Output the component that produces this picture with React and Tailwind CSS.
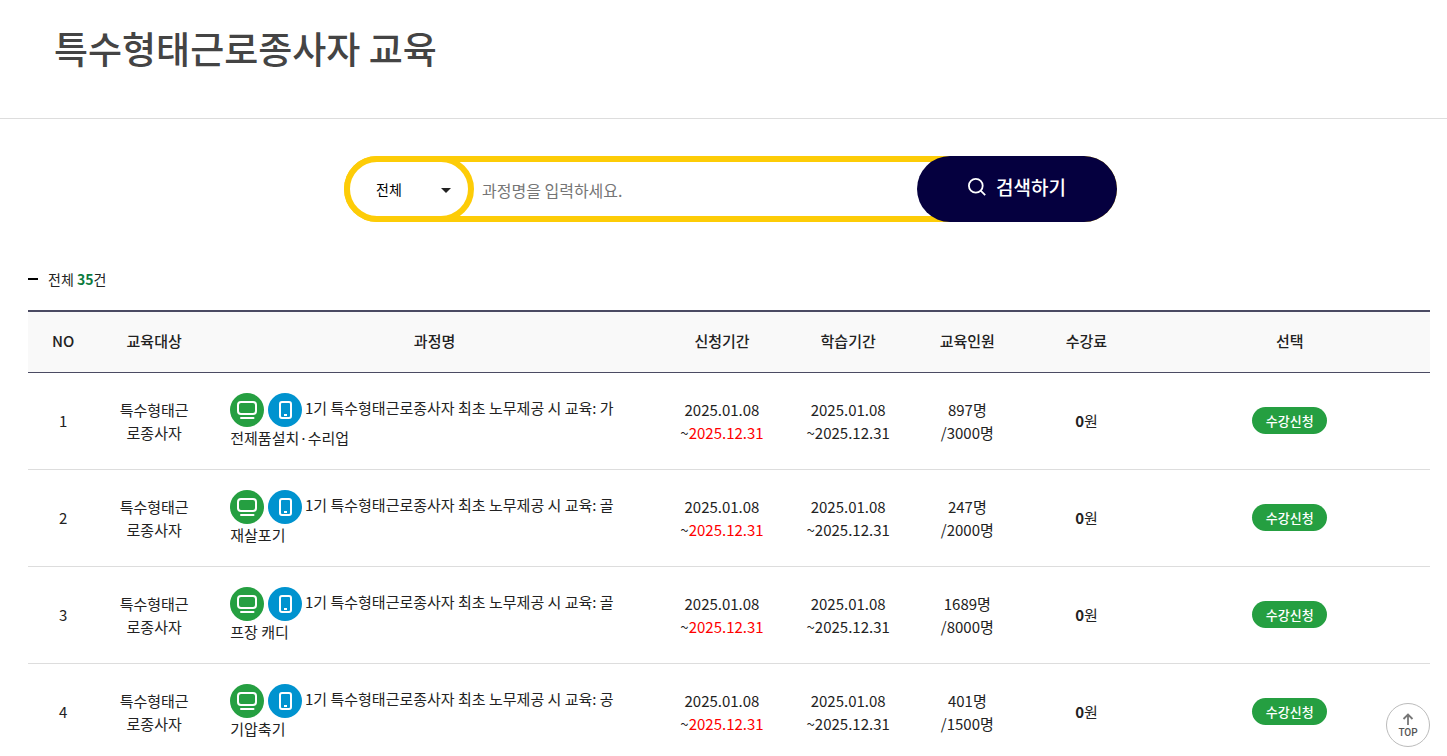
import { useState } from 'react';

const COURSES = [
  { no: 1, name: '가전제품설치·수리업', applied: 897, capacity: 3000 },
  { no: 2, name: '골재살포기', applied: 247, capacity: 2000 },
  { no: 3, name: '골프장 캐디', applied: 1689, capacity: 8000 },
  { no: 4, name: '공기압축기', applied: 401, capacity: 1500 },
];

const COLUMNS = [
  { label: 'NO', width: 'w-[5%]' },
  { label: '교육대상', width: 'w-[8%]' },
  { label: '과정명', width: 'w-[32%]' },
  { label: '신청기간', width: 'w-[9%]' },
  { label: '학습기간', width: 'w-[9%]' },
  { label: '교육인원', width: 'w-[8%]' },
  { label: '수강료', width: 'w-[9%]' },
  { label: '선택', width: 'w-[20%]' },
];

function PcIcon() {
  return (
    <svg role="img" aria-label="PC" viewBox="0 0 34 34" className="inline-block size-[34px] align-middle">
      <circle cx="17" cy="17" r="17" fill="#259f41" />
      <rect x="8" y="9" width="18" height="12" rx="3" fill="none" stroke="#fff" strokeWidth="2" />
      <path d="M11 25h12.5" stroke="#fff" strokeWidth="2" strokeLinecap="round" />
    </svg>
  );
}

function MobileIcon() {
  return (
    <svg role="img" aria-label="모바일" viewBox="0 0 34 34" className="inline-block size-[34px] align-middle">
      <circle cx="17" cy="17" r="17" fill="#0093cf" />
      <rect x="12" y="9" width="11" height="16" rx="2" fill="none" stroke="#fff" strokeWidth="2" />
      <path d="M16 22h3" stroke="#fff" strokeWidth="2" />
    </svg>
  );
}

function SearchBar() {
  const [type, setType] = useState('all');
  const [keyword, setKeyword] = useState('');

  return (
    <form
      onSubmit={(e) => e.preventDefault()}
      className="mx-auto flex h-[66px] w-full max-w-[773px] rounded-full bg-[#fdcc07]"
    >
      {/* the field runs on under the round end of the button */}
      <div className="relative -mr-9 flex grow">
        <div className="my-[6px] ml-[90px] flex grow bg-white">
          <input
            type="text"
            aria-label="과정명"
            placeholder="과정명을 입력하세요."
            value={keyword}
            onChange={(e) => setKeyword(e.target.value)}
            className="w-full pt-[2px] pr-12 pl-12 text-base text-[#222] outline-none placeholder:text-[#757575]"
          />
        </div>
        <div className="absolute inset-y-0 left-0 w-[130px]">
          <select
            aria-label="검색 구분"
            value={type}
            onChange={(e) => setType(e.target.value)}
            className="size-full appearance-none rounded-full border-6 border-[#fdcc07] bg-white pl-[26px] text-sm text-black outline-none"
          >
            <option value="all">전체</option>
            <option value="name">과정명</option>
          </select>
          <svg viewBox="0 0 10 5" className="pointer-events-none absolute top-8 right-[23px] h-[5px] w-[10px]">
            <path d="M0 0h10L5 5z" fill="#222" />
          </svg>
        </div>
      </div>
      <button
        type="submit"
        className="relative flex w-[200px] shrink-0 items-center justify-center gap-[10px] rounded-full bg-[#05003f] pb-1 text-[19px] font-medium text-white"
      >
        <svg viewBox="0 0 18 18" className="size-[18px]" fill="none" stroke="#fff" strokeWidth="1.8">
          <circle cx="7.8" cy="7.8" r="6.9" />
          <path d="M12.7 12.7l4.5 4.5" />
        </svg>
        검색하기
      </button>
    </form>
  );
}

function CourseRow({ course }) {
  return (
    <tr className="border-b border-[#ddd]">
      <td>{course.no}</td>
      <td className="px-5 break-all">특수형태근로종사자</td>
      <td className="py-5 pr-9 pl-5 text-left leading-[22px] break-all">
        <PcIcon /> <MobileIcon />
        {` 1기 특수형태근로종사자 최초 노무제공 시 교육: ${course.name}`}
      </td>
      <td>
        2025.01.08
        <br />~<span className="text-[#f00]">2025.12.31</span>
      </td>
      <td>
        2025.01.08
        <br />
        ~2025.12.31
      </td>
      <td>
        {course.applied}명
        <br />/{course.capacity}명
      </td>
      <td>
        <strong className="font-bold">0</strong>원
      </td>
      <td>
        <button type="button" className="h-[27px] w-[75px] rounded-full bg-[#259f41] text-[13px] font-medium text-white">
          수강신청
        </button>
      </td>
    </tr>
  );
}

export default function App() {
  return (
    <div className="h-screen overflow-hidden bg-white font-['Noto_Sans_CJK_KR',sans-serif] text-[#222]">
      <header className="border-b border-[#ddd] pt-[18px] pb-10 pl-[54px]">
        <h1 className="text-[37px] leading-[60px] font-medium text-[#444]">특수형태근로종사자 교육</h1>
      </header>

      <section className="pt-[37px] pl-[14px]">
        <SearchBar />
      </section>

      <main className="pt-[45px] pr-[17px] pl-7">
        <p className="flex items-center gap-[10px] text-sm leading-6">
          <span className="h-[2px] w-[10px] bg-black"></span>
          <span>
            전체 <strong className="font-bold text-[#0b7b3e]">35</strong>건
          </span>
        </p>

        <table className="mt-[19px] w-full table-fixed border-collapse text-center text-[15px] leading-[23px]">
          <thead>
            <tr className="h-[61px] border-t-2 border-b border-[#4b4b63] bg-[#f9f9f9]">
              {COLUMNS.map((col) => (
                <th key={col.label} scope="col" className={`${col.width} pb-[2px] font-medium`}>
                  {col.label}
                </th>
              ))}
            </tr>
          </thead>
          <tbody>
            {COURSES.map((course) => (
              <CourseRow key={course.no} course={course} />
            ))}
          </tbody>
        </table>
      </main>

      <a
        href="#root"
        className="fixed right-[17px] bottom-[9px] flex size-11 flex-col items-center rounded-full border border-[#bbb] bg-white pt-[9px] font-[Roboto,sans-serif] text-[10px] leading-3 font-medium text-[#555]"
      >
        <svg viewBox="0 0 12 12" className="mb-[2px] size-3 shrink-0" fill="none" stroke="#777" strokeWidth="1.8">
          <path d="M6 12V1.5M1.5 6L6 1.5L10.5 6" />
        </svg>
        TOP
      </a>
    </div>
  );
}
